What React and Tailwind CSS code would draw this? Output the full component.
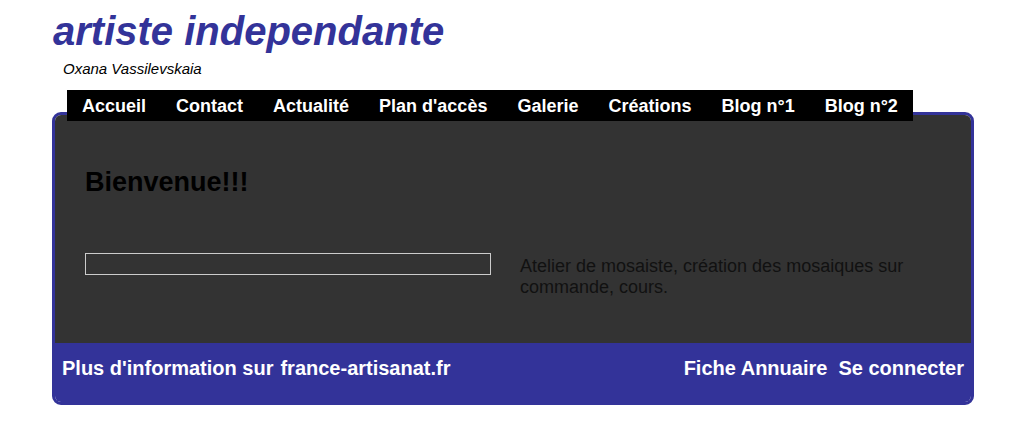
export default function App() {
  const links = ['Accueil', 'Contact', 'Actualité', "Plan d'accès", 'Galerie', 'Créations', 'Blog n°1', 'Blog n°2']

  return (
    <div className="w-[1024px] h-[426px] bg-white font-['Liberation_Sans',Arial,sans-serif] overflow-hidden">
      {/* Header */}
      <header className="pt-[8px]">
        <h1 className="pl-[53px] text-[40px] leading-[46px] font-bold italic text-[#333399]">
          artiste independante
        </h1>
        <p className="pl-[63px] mt-[6px] text-[15px] leading-[17px] italic text-black">Oxana Vassilevskaia</p>
      </header>

      {/* Menu */}
      <nav className="relative z-10 ml-[67px] mt-[13px] -mb-[9px] w-fit h-[31px] bg-black flex">
        {links.map((l) => (
          <a key={l} href="#" className="shrink-0 whitespace-nowrap px-[15px] pt-[1px] text-[18px] leading-[30px] font-bold text-white">
            {l}
          </a>
        ))}
      </nav>

      {/* Main box */}
      <main className="ml-[52px] w-[922px] border-[3px] border-[#333399] rounded-[9px] overflow-hidden">
        <section className="bg-[#333333] pl-[30px] pr-[30px] pt-[52px] pb-[45px]">
          <h2 className="text-[27px] leading-[31px] font-bold text-black">Bienvenue!!!</h2>
          <div className="flex items-start mt-[55px]">
            <div className="w-[406px] h-[22px] border border-[#cccccc]" />
            <p className="ml-[29px] pt-[3px] flex-1 text-[18px] leading-[21px] text-[#111111]">
              Atelier de mosaiste, création des mosaiques sur commande, cours.
            </p>
          </div>
        </section>
        <footer className="bg-[#333399] flex justify-between px-[7px] pt-[14px] pb-[22px] text-[20px] leading-[23px] font-bold text-white">
          <div className="flex gap-[7px]">
            <span>Plus d'information sur</span>
            <a href="#">france-artisanat.fr</a>
          </div>
          <div className="flex gap-[11px]">
            <a href="#">Fiche Annuaire</a>
            <a href="#">Se connecter</a>
          </div>
        </footer>
      </main>
    </div>
  )
}
